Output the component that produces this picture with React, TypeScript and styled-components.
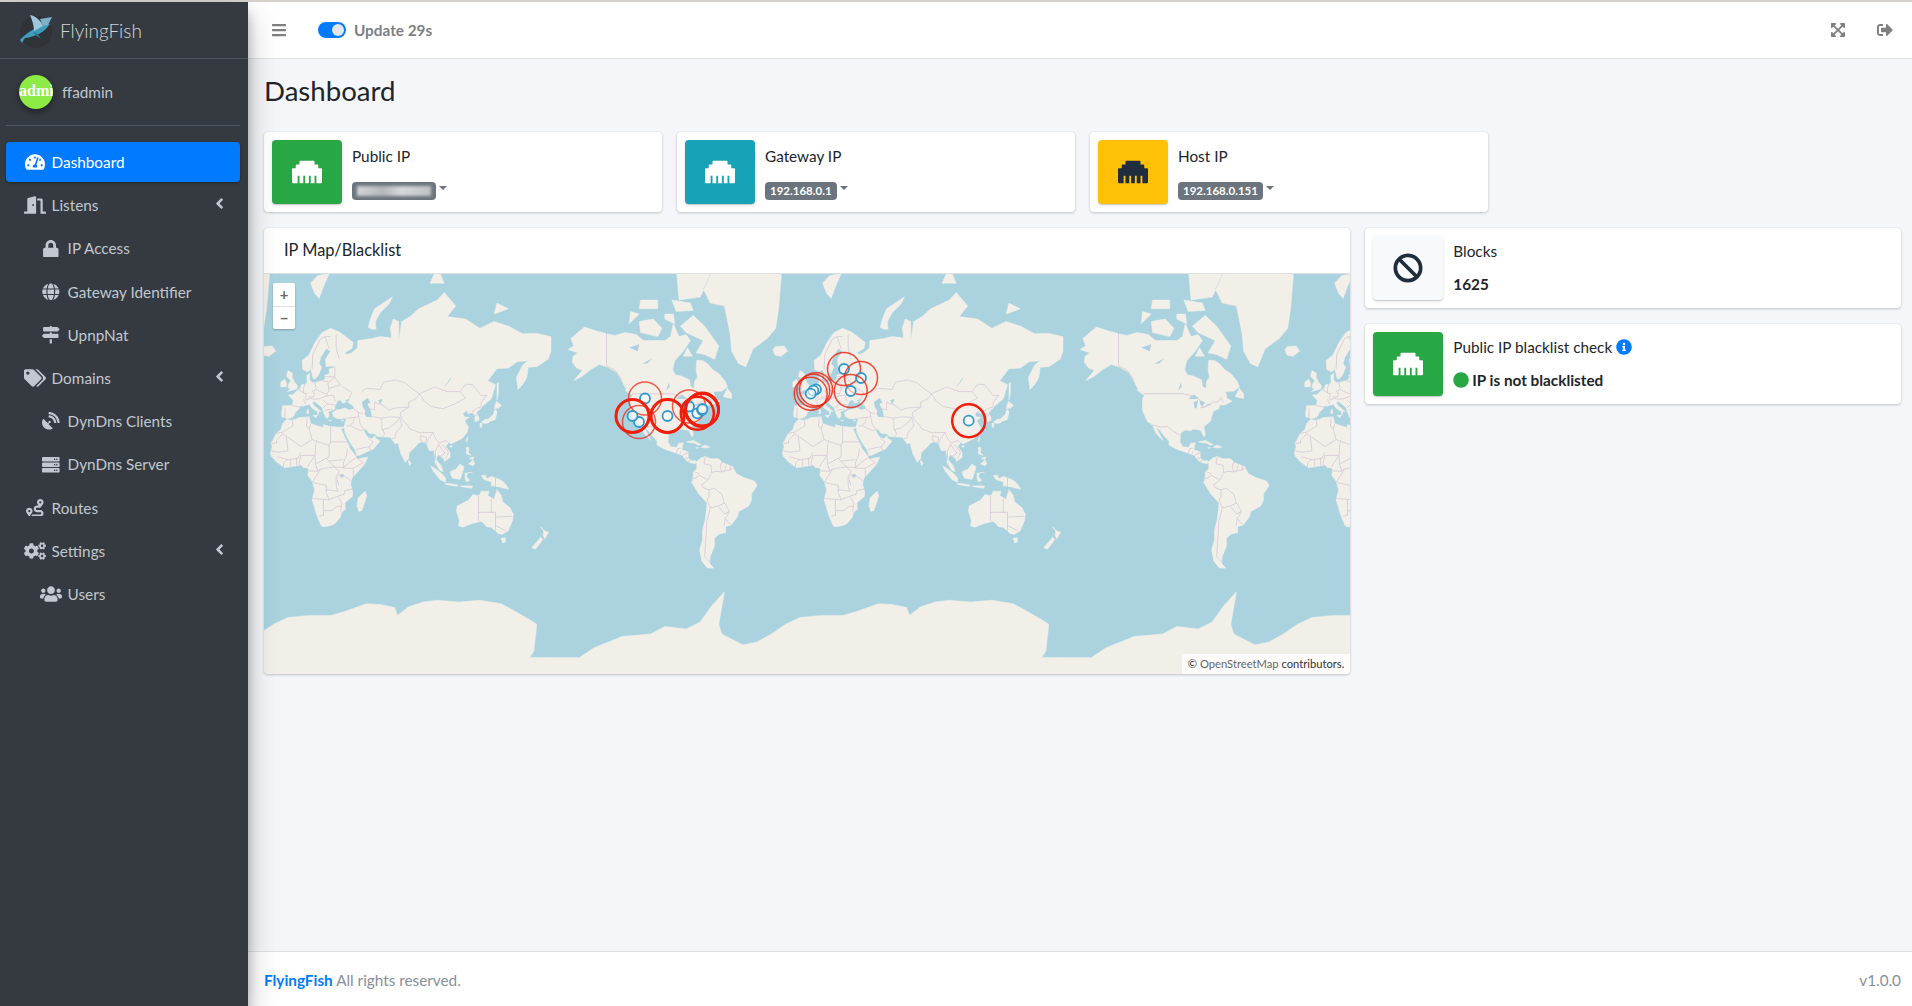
import React from "react";
import styled, { createGlobalStyle } from "styled-components";
import {
  FaAngleLeft,
  FaBan,
  FaBars,
  FaCircle,
  FaCogs,
  FaDoorOpen,
  FaEthernet,
  FaExpandArrowsAlt,
  FaGlobe,
  FaInfoCircle,
  FaLock,
  FaMapSigns,
  FaRoute,
  FaSatelliteDish,
  FaServer,
  FaSignOutAlt,
  FaTachometerAlt,
  FaTags,
  FaUsers,
} from "react-icons/fa";

type Pt = [number, number];

const LAND: Pt[][] = [
  // north america
  [[-168,65.5],[-164,66.5],[-166,68.5],[-156.5,71.3],[-148,70.4],[-141,69.7],[-135,69.3],[-128,70],[-120,69.5],[-115,68],[-108,68],[-100,68],[-96,69],[-94,72],[-90,69],[-85,69.5],[-82,68],[-87,65],[-93,62],[-94.5,59],[-92.5,57],[-88,56.5],[-82.5,55],[-82,52.5],[-79.5,51.3],[-79,54.5],[-77,56],[-78,59],[-77.5,62.3],[-73,62],[-70,61],[-66,58.8],[-62,57.5],[-57.5,54.5],[-56,52],[-60,50.2],[-66,50],[-65,48.5],[-65,47],[-61,45.5],[-66,43.7],[-70,43.5],[-70.5,41.6],[-74,40.5],[-75.5,37.5],[-76,35],[-81,31.5],[-80,27],[-80.5,25.2],[-82,27],[-83,29.2],[-85,29.7],[-89,30],[-90,29.1],[-94,29.5],[-97.3,27.5],[-97.7,22],[-95.5,18.7],[-91.5,18.5],[-90.4,21],[-87,21.4],[-88,17],[-83.5,15.3],[-83.5,11],[-81,9],[-79.5,9.5],[-77.5,8.7],[-78,7.5],[-80,7.3],[-83,8.3],[-85.5,10],[-87.5,13],[-92,14.5],[-96,15.8],[-101,17.5],[-105.5,20],[-105.5,22.5],[-109,26],[-112.5,30],[-114.7,31.5],[-112,27],[-109.7,23],[-112,25],[-115,28],[-117,32.5],[-120.5,34.5],[-122.5,37.8],[-124.2,41],[-124,46.5],[-122.7,48.5],[-127,50.8],[-130,54.5],[-134,58],[-140,59.8],[-146,60.8],[-152,59],[-158,56.5],[-164,54.7],[-158,58.7],[-162,59.5],[-165,61.5],[-164.5,63.5],[-161,64.5]],
  // arctic canada
  [[-80,73.7],[-72,71.5],[-62,66.5],[-65,62.5],[-72,64],[-78,64.5],[-73,68],[-85,70],[-89,71.5]],
  [[-117,70],[-105,69],[-102,71],[-108,73],[-118,72.5]],
  [[-125,72],[-118,74],[-124,74.5]],
  [[-90,76.5],[-75,77],[-62,82],[-75,83],[-92,81]],
  [[-92,74.5],[-80,74.7],[-82,76],[-95,76.5]],
  [[-118,75],[-105,75],[-105,76.5],[-117,76.5]],
  [[-100,73],[-93,72],[-94,74],[-100,74]],
  [[-87,63.5],[-80.5,63.5],[-84,66]],
  [[-59,47.7],[-53,46.7],[-53,49],[-56,51.5]],
  [[-128,50.7],[-123.5,48.4],[-125,50]],
  [[-85,22],[-80,23],[-74.2,20.2],[-77.5,19.9],[-78,21]],
  [[-74.4,18.5],[-72,20],[-68.4,18.7],[-71,18]],
  [[-78.3,18.2],[-76.3,18.2],[-77,17.8]],
  // greenland, iceland
  [[-73,78.2],[-68,80.2],[-60,82],[-40,83.5],[-25,83],[-18,80],[-20,75],[-22,71],[-28,68.5],[-38,65.7],[-43,60],[-48,61],[-53,65],[-54,69.5],[-58,75.5],[-68,76]],
  [[-24,65.5],[-22,66.4],[-16,66.5],[-13.6,65],[-18.5,63.4],[-22.5,63.9]],
  // south america
  [[-77.5,8.7],[-75,11],[-71.5,12.3],[-68,10.7],[-62,10.7],[-60,8.3],[-52,5],[-50,0.5],[-44,-2.7],[-37,-5],[-35,-8],[-39,-14],[-39,-18],[-41,-22],[-48,-25.5],[-48.7,-28.5],[-53.5,-34],[-57,-34.5],[-57,-38],[-62,-39],[-65,-41],[-65,-45],[-68,-50],[-68.5,-53],[-65.5,-55],[-70,-55],[-74,-52],[-75.5,-47],[-73.5,-42],[-73.5,-37],[-71.5,-30],[-70.3,-20],[-76,-14],[-81,-6],[-80,-2.5],[-80,1],[-77.5,4]],
  // eurasia
  [[-9,37],[-9.5,38.7],[-8.8,43.2],[-2,43.4],[-1.2,46],[-4.7,48.4],[-1.5,48.7],[1.5,50.5],[3.5,51.4],[4.7,53],[8.5,53.6],[8.3,56.8],[10.5,57.6],[10.2,55],[12,54],[14,54],[18.5,54.7],[21,55.2],[21,57],[24,57.3],[24,59.3],[28,59.7],[30,60],[25,60.2],[22,60],[21.3,62.5],[25,65],[22,65.8],[18,63],[17,61],[18.8,59.8],[16.5,57],[14.3,55.5],[12.8,55.5],[11.2,59],[8.5,58.2],[5.5,59],[5,62],[10,64],[14,67.5],[19,70],[25,71],[31,70.2],[41,67.5],[40,65.8],[34.8,64.5],[37,64],[40,64.6],[44,66],[44,68],[54,68.5],[60,69],[68,68.7],[67,71],[69,73],[73,72.5],[73,68],[75,72.5],[81,73.5],[87,75],[100,76.5],[105,77.7],[113,75.5],[107,73.5],[120,73],[130,71],[140,72.5],[150,71.5],[160,69.7],[170,69.8],[180,69],[180,65],[178,62.5],[170,60],[164,59.8],[163,56],[160,53],[156.7,51],[155.7,56],[160,60.5],[163.5,62],[156,61.7],[150,59.5],[142,59.3],[135.5,54.7],[141,53],[138,46.7],[132,43],[129.5,41],[127.5,39.7],[129.4,37],[129.2,35.2],[126.4,34.5],[126.6,37.5],[125,39.6],[121.5,39],[121,40.8],[118,39],[119,37.3],[122.5,37],[119.3,35],[122,31],[121,28],[118,24.5],[113.5,22.3],[110,21],[108,21.5],[106,19],[109,15],[109,11.5],[105,8.7],[105,10],[102.5,12.5],[100.5,13.5],[99.3,10],[103,5.5],[104.2,1.5],[101.5,2.8],[98.5,8],[98.5,12],[97.5,16.5],[94.5,16],[92.5,21],[89,22],[87,21.3],[82.5,16.7],[80.2,15],[80,11],[77.6,8],[74.5,14],[73,19.5],[72.7,21],[70,21],[69,22.5],[67,25],[62,25.2],[57.5,25.6],[56.5,27],[52,27.5],[50,30],[48,30],[50,26.5],[51.5,25],[54,24],[56.3,26],[56.5,24.5],[59.8,22.5],[55.5,17.5],[52,16],[45,12.8],[43.3,12.8],[42.5,16.5],[39,21],[35,28],[34.9,29.5],[34.3,31.3],[35,33],[36,36.7],[32,36],[29,36.5],[27,37.5],[26.3,39.5],[29,41],[31.5,41.2],[35,42],[38,41],[41.5,41.5],[41,43],[37,45],[39,47],[35,46],[36,45],[33.5,44.5],[32.5,46],[30.5,46],[28,43],[28,41.5],[26,40.8],[23.5,40.3],[24,38],[23,36.5],[21.5,37],[19.5,41],[19,42.3],[14,45.3],[12.3,45],[13,43.5],[16,41.8],[18.4,40],[16.8,40.4],[16,38],[15.7,40],[12,42],[10,44],[6,43],[3.3,43],[3,41.7],[0,39.5],[-0.5,38],[-2,36.8],[-5.5,36],[-7,37]],
  // africa
  [[-6,35.8],[-2,35.2],[3,36.8],[10,37.3],[11,33.5],[15,32.3],[20,31],[20,32.8],[25,31.6],[32,31.2],[34.3,31.3],[32.6,29.8],[33.5,28],[35.5,24],[37.2,21],[38.5,18],[43,12],[44,10.5],[51.2,11.8],[49,7],[44,1.5],[40,-3],[39,-7],[40.5,-12],[40.5,-15.5],[35,-20],[35.5,-24],[32.8,-26],[32,-29],[28,-33],[25.5,-34],[20,-34.8],[18.3,-34],[15,-27],[12,-18],[13.8,-11],[12,-5],[9,-1],[9.5,4],[6,4.5],[4,6.3],[-3,5],[-7.5,4.5],[-13,8.5],[-16.7,12.5],[-17.3,14.7],[-16,19],[-17,21],[-13,27.5],[-9.8,30],[-9,33]],
  [[49.3,-12],[50.5,-15.5],[47,-25],[45,-25.5],[43.5,-22],[44.5,-16.5]],
  // british isles, mediterranean islands, arctic islands
  [[-5.5,50],[1.3,51.2],[1.7,52.7],[-0.2,54],[-2,56],[-2,57.7],[-5,58.6],[-6,56.5],[-3,54.8],[-4.5,53.3],[-5,51.7],[-3,51.3]],
  [[-10,52],[-6,52.2],[-6,54],[-7.3,55.3],[-10,54.2]],
  [[12.5,38],[15.5,38.2],[15,36.7]],
  [[8.3,39],[9.6,39.2],[9.5,41.2],[8.6,41]],
  [[23.5,35.5],[26,35.2],[24.5,34.9]],
  [[32.5,35],[34.5,35.5],[33.5,34.7]],
  [[11,79],[16,80],[24,80.2],[20,78.5],[17,76.8],[14,77.5]],
  [[51.5,71.2],[53,73],[56,75],[62,76],[68.5,77],[66,75.8],[60,74.3],[56.5,72.5],[57,70.8],[54,70.8]],
  [[95,79],[105,79],[100,81]],
  [[140,74],[150,75],[142,76]],
  // east asia islands
  [[130.9,34],[133,35.5],[136,36],[137.5,37.3],[139.5,38.5],[140,40.5],[141.3,41.3],[142,39.5],[140.8,35.7],[137,34.6],[135.5,33.6],[132.5,34]],
  [[130,33.5],[131.7,33.5],[131,31],[130.2,31.3]],
  [[132.5,33.7],[134.5,34.2],[134,33.3]],
  [[140,41.6],[141.5,45.4],[145.3,43.5],[143,42]],
  [[142,46],[143,49],[143,54],[142,53.5],[142,48]],
  [[120.2,23],[121.5,25.2],[121,22]],
  [[108.7,19.2],[110.5,20],[110,18.3]],
  [[80,9.7],[81.8,7.5],[80.5,6],[79.8,8]],
  [[120.5,18.5],[122.2,18.4],[122,15],[124,13],[120.5,14]],
  [[122,7],[125.5,9.8],[126.4,7],[125,5.8]],
  [[122.5,11],[125.5,12],[125,10]],
  // indonesia, oceania
  [[95.3,5.6],[98,4.2],[103.5,0],[106,-3],[105.8,-5.8],[102,-4],[98,1]],
  [[105.3,-6.7],[108.5,-6.6],[114.5,-7.7],[114.3,-8.7],[106.5,-7.5]],
  [[109,1.5],[111.5,2.8],[113,3.2],[116,7],[119,5],[118,2],[117.5,0],[116,-3.8],[111,-3],[109.5,-0.5]],
  [[119.5,0.5],[124.8,1.3],[121,0.5],[120.5,-2],[123,-4.5],[120.5,-5.5],[119.5,-3]],
  [[131,-1],[134,-0.8],[135,-3.3],[138,-1.7],[144,-3.8],[147,-6],[150.5,-10.5],[147,-10],[143.5,-9],[138,-8.3],[138,-5.5],[133,-4]],
  [[116,-8.5],[122,-8.3],[125,-8.5],[124,-10],[118,-9]],
  [[114,-22],[122,-18],[125,-14.5],[129.5,-15],[131,-12],[136.5,-12],[135.5,-15],[140,-17.5],[142,-11],[145,-15],[146,-19],[151,-23],[153.5,-27],[153,-31],[150,-37],[146,-39],[143,-38.7],[138,-35],[135,-34.8],[131,-31.5],[124,-33],[118,-35],[115,-34.3],[115.5,-31],[113.5,-25]],
  [[145,-41],[148,-41],[148,-43],[146,-43.5]],
  [[173,-35],[175.5,-37],[178.3,-38],[175.5,-41.5],[174.5,-39.5],[174.8,-37]],
  [[172.7,-40.6],[174.2,-41.7],[171,-45],[169,-46.6],[166.5,-46],[170,-43]],
  // antarctica
  [[-180,-78],[-160,-78],[-150,-76.5],[-130,-74.5],[-110,-74],[-100,-72.5],[-85,-73],[-75,-71.5],[-68,-68],[-58,-63.5],[-60,-68],[-62,-72],[-60,-74],[-45,-76],[-35,-75.5],[-25,-74],[-15,-72],[-5,-70.5],[10,-70],[25,-70],[35,-69],[50,-67],[60,-67.2],[70,-68],[72,-70],[80,-67.8],[90,-66.5],[100,-66],[115,-66.5],[130,-66],[145,-67],[155,-69],[165,-71],[170,-72],[168,-77],[165,-78],[180,-78],[180,-85],[-180,-85]],
];

const WATER: Pt[][] = [
  [[47,45],[51,47],[53,45],[51,44],[53.5,40],[54,37],[50,37.3],[49,39],[49.5,40.5],[47.5,43]],
  [[58.5,46],[61.5,46.5],[60,44]],
  [[104,51.7],[106,52.7],[110,55.7],[109,55.5],[105.5,52.6]],
  [[-92,46.7],[-88,48.7],[-84.7,47],[-87,46.5]],
  [[-87.5,41.7],[-88,45],[-85,46],[-86,42]],
  [[-84,46],[-80,45],[-82,43],[-83.5,44]],
  [[-83.4,41.7],[-79,42.8],[-79,43],[-83,42.3]],
  [[-79.7,43.3],[-76.3,43.5],[-76.3,44.2],[-79,43.9]],
  [[-125,66],[-118,67],[-119,65]],
  [[-116,61],[-109,62.7],[-112,61.2]],
  [[-99,50.5],[-97,54],[-96.5,52]],
  [[32,0],[34,0],[34,-2.5],[32,-2.5]],
  [[29.5,-4],[30,-4],[31,-8.5],[30.5,-8]],
];

const BORDERS: Pt[][] = [
  [[-123,49],[-95,49],[-89,48],[-84.5,46.5],[-82.5,45],[-82.5,42.5],[-79,43],[-76,44.3],[-74.7,45],[-71,45.2],[-69,47.3],[-67.8,45.7],[-67,44.8]],
  [[-141,69.7],[-141,60.3],[-135,58.8],[-130,55]],
  [[-117,32.5],[-111,31.3],[-106.5,31.7],[-103,29],[-97.2,26]],
  [[-92,14.5],[-91,17.5],[-89,17.8],[-88.3,18]],
  [[-89.2,14],[-88.5,15.8]],
  [[-87.5,13],[-83.2,15]],
  [[-85.7,11],[-83.7,11]],
  [[-83,8.3],[-82.7,9.7]],
  [[-71.5,12],[-72.5,7.3],[-67.5,6],[-67,1.2]],
  [[-60,8.3],[-61,5],[-60,1.5]],
  [[-57,6],[-58,2]],
  [[-54,5.8],[-54,2.3]],
  [[-52,3.7],[-60,1.5],[-64,2],[-67,1.2],[-69.8,-4.3],[-74,-7.5],[-73,-9.5],[-69.5,-11],[-65.3,-10],[-60,-14],[-58,-20],[-54.5,-25.5],[-57.5,-30],[-53.5,-33.8]],
  [[-80,-3.5],[-75.5,-1],[-70,-4]],
  [[-78.8,1.4],[-75.5,0]],
  [[-70.3,-18.3],[-69,-16],[-69,-11]],
  [[-68,-23],[-70.5,-32],[-71,-40],[-72,-50],[-68.5,-52.3]],
  [[-68,-23],[-62.5,-22],[-58,-20]],
  [[-62.5,-22],[-58,-27],[-54.5,-25.5]],
  [[-58.3,-34],[-57.5,-30]],
  [[-70.3,-18.3],[-68,-23]],
  [[-1.8,43.3],[3,42.5]],
  [[-7,42],[-7,37.2]],
  [[2.5,51],[6,49.5],[8,49],[7.5,47.5],[6,46.3],[7.5,43.8]],
  [[14,54],[15,51],[12.2,50.3],[13.7,48.7],[13,47.5],[9.6,47.5]],
  [[6,49.5],[6,51.5],[7,53.3]],
  [[18.5,54.7],[23,54.3],[24,50.5],[22.5,49],[19,49.5],[15,51]],
  [[7,46],[10.5,46.8],[13.7,46.5]],
  [[13.7,46.5],[16.5,46.5],[22,48],[22.5,49]],
  [[22,48],[27,48.3],[28.2,45.5]],
  [[22.7,44],[28.5,43.7]],
  [[21,40.8],[26,41.5]],
  [[19.5,42],[22.7,44],[20,46]],
  [[33,52.3],[40,49.6],[38.2,47.1]],
  [[23.5,53.9],[28,56],[32,53],[24,51.5]],
  [[28,56],[28,59.5]],
  [[21,56.3],[28,56.2]],
  [[31,62.5],[29,66],[29,69.5]],
  [[25,69],[21,69],[24,65.8]],
  [[12,59],[12.5,64],[18,68.5],[21,69]],
  [[44.5,39.7],[44.8,37.2],[36.5,36.5]],
  [[42,37],[41,34.5],[39,32.2],[46.5,29],[48,30]],
  [[44.8,37.2],[46,33],[48,30]],
  [[41.5,41.5],[44.5,39.7],[48,39]],
  [[61,36.5],[61,31],[63,27],[61.5,25]],
  [[39,32.2],[36,32]],
  [[52,19],[55,22],[52,24],[51.5,25]],
  [[43,17],[52,19],[53,16.5]],
  [[47,50],[50,51.5],[60,51],[62,54],[70,55],[77,54],[83,51],[87.5,49]],
  [[51,42],[56,41],[56,45],[62,43.5],[66,41],[70,42],[80,42.5]],
  [[54,37.5],[61,36.5]],
  [[80,42.5],[80,45],[85.5,47],[87.5,49]],
  [[87.5,49],[98,52],[107,50],[116,50],[120,47],[112,44],[104,41.7],[96,42.7],[91,45.5],[87.5,49]],
  [[116,50],[120,53.3],[125,53],[131,48],[135,48.4],[131,45],[130.7,42.5]],
  [[124.5,40],[128,42],[130.7,42.5]],
  [[126,38],[128.5,38.5]],
  [[80,42.5],[74,39.5],[75,36],[79,32.5],[81,30],[88,27.8],[92,28],[97,28],[98.5,24.5],[101.5,21.3],[106,23],[108,21.5]],
  [[74,36],[75,32],[71,28],[70,24.5],[68,23.7]],
  [[61,29.5],[66.5,31],[71,34],[74,37]],
  [[61,36.5],[66,37.3],[74,37]],
  [[88,26],[89,22],[92,21],[92.5,25],[88,26]],
  [[92.5,21],[94.5,25],[97,28]],
  [[98.5,16],[99,10]],
  [[98.5,16],[101,20],[101.5,21.3]],
  [[101,20],[105.5,14.5],[102.5,12.5]],
  [[104,20],[108,15],[106,11]],
  [[-2,35],[-1.5,32],[-9,28],[-13,27.5]],
  [[-17,21],[-13,21.3],[-13,23],[-8.7,27.3]],
  [[-6,25],[-5,16],[-12,15],[-16.5,16]],
  [[-8.7,27.3],[1,21],[4,19],[12,23.5],[10,30],[8,32],[8.5,36.8]],
  [[11,33],[10,30]],
  [[12,23.5],[24,19.5],[25,22],[25,31.6]],
  [[25,22],[37,22]],
  [[15,23],[14,13],[14.5,7],[22,11],[24,12],[24,19.5]],
  [[22,11],[27.5,5],[34,4.5],[38,8],[43,11.5]],
  [[37,17.5],[36,12.5],[34,8],[34,4.5]],
  [[24,9],[34,10]],
  [[4,13],[14,13]],
  [[2.7,6.3],[4,13]],
  [[8.5,4.7],[14,13]],
  [[-12,12],[-5,10],[2,11],[4,15]],
  [[-8,4.5],[-8,8],[-5,10]],
  [[-3,5],[-3,11]],
  [[1,6],[1,11]],
  [[12,-6],[13,-4.5],[18,3.5],[27.5,5],[31,2],[29,-2],[29,-8],[30,-12],[22,-11],[22,-8],[12.5,-6]],
  [[9.5,2.2],[16,2],[18,3.5]],
  [[14.5,7],[16,2]],
  [[34,4],[41,4],[41,-2]],
  [[34,-1],[39,-4.7]],
  [[30,-1],[34,-1]],
  [[40.5,-10.5],[35,-11.5],[34.5,-14],[30,-15.5],[33,-20],[32,-26]],
  [[12,-17],[23,-17.8]],
  [[22,-11],[22,-13],[24,-18]],
  [[20,-18],[20,-28],[17,-28.5]],
  [[20,-25],[26,-25],[29,-22.3],[33,-22]],
  [[23,-18],[30,-15.5]],
  [[41,4],[48,8],[43,11.5]],
  [[129,-15],[129,-31.5]],
  [[129,-26],[141,-26]],
  [[138,-17],[138,-26]],
  [[141,-26],[141,-38]],
  [[141,-29],[153,-28.5]],
  [[141,-34],[148,-37]],
  [[141,-2.6],[141,-9]],
];

const MAP_W = 1086;
const MAP_H = 400;
const WORLD = 512;

const px = ([lon, lat]: Pt, shift: number): string => {
  const x = MAP_W / 2 + (lon * WORLD) / 360 + shift;
  const y =
    MAP_H / 2 -
    (WORLD / (2 * Math.PI)) *
      Math.log(Math.tan(Math.PI / 4 + (lat * Math.PI) / 360));
  return `${x.toFixed(1)} ${y.toFixed(1)}`;
};

function toPath(lines: Pt[][], closed: boolean) {
  return [-WORLD, 0, WORLD]
    .map((shift) =>
      lines
        .map(
          (line) =>
            "M" + line.map((p) => px(p, shift)).join("L") + (closed ? "Z" : ""),
        )
        .join(""),
    )
    .join("");
}

// pane coordinates of the markers; heavy rings are several stacked features
const MARKERS = [
  { x: 381, y: 124.5, opacity: 0.7, width: 1.5 },
  { x: 375, y: 148, opacity: 0.7, width: 1.5 },
  { x: 368.5, y: 142, opacity: 1, width: 3 },
  { x: 403.5, y: 142, opacity: 1, width: 3 },
  { x: 425, y: 132.5, opacity: 0.7, width: 1.5 },
  { x: 433.3, y: 139.3, opacity: 1, width: 2.5 },
  { x: 438, y: 136, opacity: 1, width: 3 },
  { x: 438.5, y: 135, opacity: 1, width: 2 },
  { x: 580, y: 95, opacity: 0.8, width: 1.5 },
  { x: 597, y: 104, opacity: 0.8, width: 1.5 },
  { x: 586.7, y: 117, opacity: 0.8, width: 1.5 },
  { x: 552, y: 115.3, opacity: 0.8, width: 1.5 },
  { x: 549.3, y: 116.7, opacity: 0.8, width: 1.5 },
  { x: 546.7, y: 119.7, opacity: 0.8, width: 1.5 },
  { x: 704.7, y: 146.7, opacity: 1, width: 2.5 },
];

const GlobalStyle = createGlobalStyle`
  html, body { margin: 0; height: 100%; }
  body {
    font-family: "Lato", "Liberation Sans", sans-serif;
    font-size: 15.3px;
    color: #212529;
    background: #f4f6f9;
  }
`;

const Page = styled.div`
  height: 100vh;
  display: grid;
  grid-template-columns: 248px 1fr;
  grid-template-rows: 2px 1fr;
  overflow: hidden;
`;

const TopLine = styled.div`
  grid-column: 1 / 3;
  background: #d6d1cc;
`;

const Sidebar = styled.aside`
  background: #343a40;
  color: #c2c7d0;
  box-shadow: 0 14px 28px rgba(0, 0, 0, 0.25), 0 10px 10px rgba(0, 0, 0, 0.22);
  z-index: 2;
`;

const Brand = styled.div`
  height: 56px;
  border-bottom: 1px solid #4b545c;
  display: flex;
  align-items: center;
  gap: 7px;
  padding-left: 19px;
  font-size: 19px;
  font-weight: 300;
  color: rgba(255, 255, 255, 0.8);
`;

const UserPanel = styled.div`
  margin: 16px 8px 16px 6px;
  padding: 0 0 16px 13px;
  height: 34px;
  border-bottom: 1px solid #4f5962;
  display: flex;
  align-items: flex-start;
  gap: 9px;
  width: 221px;
`;

const Avatar = styled.div`
  width: 34px;
  height: 34px;
  flex: none;
  border-radius: 50%;
  background: #8cec45;
  color: #fff;
  font-family: "Liberation Serif", serif;
  font-weight: 700;
  font-size: 16px;
  line-height: 31px;
  overflow: hidden;
  white-space: nowrap;
  box-shadow: 0 3px 6px rgba(0, 0, 0, 0.16), 0 3px 6px rgba(0, 0, 0, 0.23);
`;

const UserName = styled.span`
  line-height: 34px;
`;

const Nav = styled.nav`
  padding: 0 8px 0 6px;
  display: flex;
  flex-direction: column;
  gap: 3.2px;
`;

const NavLink = styled.a<{ $active?: boolean; $sub?: boolean }>`
  height: 40px;
  display: flex;
  align-items: center;
  padding: 0 16px 0 ${({ $sub }) => ($sub ? "32px" : "16px")};
  border-radius: 4px;
  color: ${({ $active }) => ($active ? "#fff" : "#c2c7d0")};
  background: ${({ $active }) => ($active ? "#007bff" : "transparent")};
  box-shadow: ${({ $active }) =>
    $active ? "0 1px 3px rgba(0,0,0,.12), 0 1px 2px rgba(0,0,0,.24)" : "none"};
`;

const NavIcon = styled.span`
  width: 25.6px;
  margin-right: 4px;
  display: flex;
  justify-content: center;
  flex: none;
`;

const NavArrow = styled.span`
  margin-left: auto;
  margin-right: -4px;
  margin-top: -3px;
  display: flex;
  font-size: 17px;
`;

const Main = styled.div`
  display: flex;
  flex-direction: column;
  min-width: 0;
`;

const Navbar = styled.header`
  height: 56px;
  background: #fff;
  border-bottom: 1px solid #dee2e6;
  display: flex;
  align-items: center;
  padding: 0 19px 0 23px;
  color: rgba(0, 0, 0, 0.5);
`;

const BarsIcon = styled(FaBars)`
  font-size: 16px;
  margin-right: 31px;
`;

const Switch = styled.span`
  width: 28px;
  height: 16px;
  border-radius: 8px;
  background: #007bff;
  display: flex;
  align-items: center;
  justify-content: flex-end;
  padding-right: 2px;
  box-sizing: border-box;
  margin-right: 8px;

  &::after {
    content: "";
    width: 12px;
    height: 12px;
    border-radius: 50%;
    background: #e3e5e8;
  }
`;

const UpdateLabel = styled.span`
  font-weight: 700;
  color: #7b7f84;
`;

const NavbarRight = styled.div`
  margin-left: auto;
  display: flex;
  align-items: center;
  gap: 31px;
  font-size: 16px;
`;

const Content = styled.main`
  flex: 1;
  padding: 0 11px 0 16px;
`;

const Title = styled.h1`
  margin: 0;
  padding-top: 15px;
  height: 58px;
  box-sizing: content-box;
  font-size: 27.6px;
  font-weight: 400;
  line-height: 34px;
`;

const InfoRow = styled.div`
  display: grid;
  grid-template-columns: repeat(4, 1fr);
  gap: 15px;
  margin-bottom: 16px;
`;

const InfoBox = styled.div`
  display: flex;
  height: 80px;
  box-sizing: border-box;
  padding: 8px;
  background: #fff;
  border-radius: 4px;
  box-shadow: 0 0 1px rgba(0, 0, 0, 0.125), 0 1px 3px rgba(0, 0, 0, 0.2);
`;

const InfoIcon = styled.span<{ $bg: string; $fg: string }>`
  width: 70px;
  flex: none;
  border-radius: 4px;
  background: ${({ $bg }) => $bg};
  color: ${({ $fg }) => $fg};
  display: flex;
  align-items: center;
  justify-content: center;
  font-size: 30px;
  box-shadow: 0 2px 4px rgba(0, 0, 0, 0.08), 0 1px 1px rgba(0, 0, 0, 0.16);
`;

const InfoText = styled.div`
  padding: 0 10px 2px;
  display: flex;
  flex-direction: column;
  justify-content: center;
`;

const InfoTitle = styled.div`
  line-height: 26px;
  display: flex;
  align-items: center;
  gap: 4px;
`;

const InfoValue = styled.div<{ $gap: number }>`
  margin-top: ${({ $gap }) => $gap}px;
  font-weight: 700;
  line-height: 26px;
  display: flex;
  align-items: center;
  gap: 3px;
`;

const Badge = styled.span`
  background: #6c757d;
  color: #fff;
  border-radius: 4px;
  font-size: 11.5px;
  font-weight: 700;
  height: 18px;
  line-height: 18px;
  padding: 0 5px;
  display: inline-block;
`;

const HiddenIp = styled.span`
  display: block;
  width: 74px;
  height: 10px;
  margin-top: 4px;
  background: linear-gradient(90deg, #d2d4d6, #b5b8bb 35%, #d6d8da 60%, #bfc2c4);
  filter: blur(1.5px);
`;

const Caret = styled.span`
  width: 0;
  height: 0;
  margin-top: -6px;
  border-top: 4.5px solid #6c757d;
  border-left: 4.5px solid transparent;
  border-right: 4.5px solid transparent;
`;

const Columns = styled.div`
  display: grid;
  grid-template-columns: calc((100% + 15px) * 2 / 3 - 15px) 1fr;
  gap: 15px;
  align-items: start;
`;

const Card = styled.section`
  background: #fff;
  border-radius: 4px;
  overflow: hidden;
  box-shadow: 0 0 1px rgba(0, 0, 0, 0.125), 0 1px 3px rgba(0, 0, 0, 0.2);
`;

const CardHeader = styled.div`
  height: 45px;
  line-height: 44px;
  padding-left: 20px;
  font-size: 16.4px;
  border-bottom: 1px solid rgba(0, 0, 0, 0.125);
`;

const MapPane = styled.div`
  position: relative;
  height: 400px;
  background: #aad3df;
`;

const MapSvg = styled.svg`
  display: block;
`;

const ZoomControl = styled.div`
  position: absolute;
  top: 9px;
  left: 9px;
  width: 22px;
  border-radius: 2px;
  background: #fff;
  box-shadow: 0 1px 2px rgba(0, 0, 0, 0.25);
`;

const ZoomButton = styled.div`
  height: 22.5px;
  line-height: 22px;
  text-align: center;
  font-size: 15px;
  font-weight: 700;
  color: #666;

  & + & {
    border-top: 1px solid #ddd;
  }
`;

const Attribution = styled.div`
  position: absolute;
  right: 0;
  bottom: 0;
  height: 20px;
  line-height: 20px;
  padding: 0 6px;
  font-size: 11.2px;
  color: #333;
  background: rgba(255, 255, 255, 0.8);
  border-top-left-radius: 4px;
`;

const OsmLink = styled.span`
  color: #666;
`;

const SideColumn = styled.div`
  display: flex;
  flex-direction: column;
  gap: 16px;
`;

const InfoGlyph = styled(FaInfoCircle)`
  color: #007bff;
  font-size: 16px;
`;

const StatusDot = styled(FaCircle)`
  color: #28a745;
  font-size: 16px;
`;

const Footer = styled.footer`
  height: 55px;
  box-sizing: border-box;
  background: #fff;
  border-top: 1px solid #dee2e6;
  display: flex;
  align-items: center;
  justify-content: space-between;
  padding: 2px 11px 0 16px;
  color: #869099;
`;

const FooterBrand = styled.strong`
  color: #007bff;
`;

function Logo() {
  return (
    <svg width="34" height="36" viewBox="0 0 34 36" aria-hidden="true">
      <circle cx="17" cy="20" r="16" fill="#2f3338" />
      <path d="M1 28 C8 20 18 14 31 12 C26 20 16 25 6 26 L3 31 Z" fill="#3e9dbb" />
      <path d="M11 3 C16 4 22 8 24 14 L15 19 C15 13 13 8 11 3 Z" fill="#9fc6dc" />
      <path d="M21 7 L33 5 L29 13 L24 14 Z" fill="#7fb1cb" />
      <path d="M14 21 L22 27 L17 20 Z" fill="#2f7f9b" />
    </svg>
  );
}

function WorldMap() {
  const land = toPath(LAND, true);
  const water = toPath(WATER, true);
  const borders = toPath(BORDERS, false);
  return (
    <MapSvg width={MAP_W} height={MAP_H} viewBox={`0 0 ${MAP_W} ${MAP_H}`}>
      <path d={land} fill="#f2efe9" stroke="#f2efe9" strokeWidth="0.5" />
      <path d={water} fill="#aad3df" />
      <path d={borders} fill="none" stroke="#d3c3d3" strokeWidth="0.7" />
      {MARKERS.map((m, i) => (
        <g key={i}>
          <circle
            cx={m.x}
            cy={m.y}
            r="16.5"
            fill="none"
            stroke="#f01e0a"
            strokeOpacity={m.opacity}
            strokeWidth={m.width}
          />
          <circle
            cx={m.x}
            cy={m.y}
            r="5"
            fill="rgba(255,255,255,0.6)"
            stroke="#3399cc"
            strokeWidth="1.8"
          />
        </g>
      ))}
    </MapSvg>
  );
}

const MENU = [
  { label: "Dashboard", icon: <FaTachometerAlt size={20} />, active: true },
  { label: "Listens", icon: <FaDoorOpen size={22} />, arrow: true },
  { label: "IP Access", icon: <FaLock size={17.6} />, sub: true },
  { label: "Gateway Identifier", icon: <FaGlobe size={17.6} />, sub: true },
  { label: "UpnpNat", icon: <FaMapSigns size={17.6} />, sub: true },
  { label: "Domains", icon: <FaTags size={22} />, arrow: true },
  { label: "DynDns Clients", icon: <FaSatelliteDish size={17.6} />, sub: true },
  { label: "DynDns Server", icon: <FaServer size={17.6} />, sub: true },
  { label: "Routes", icon: <FaRoute size={17.6} /> },
  { label: "Settings", icon: <FaCogs size={22} />, arrow: true },
  { label: "Users", icon: <FaUsers size={22} />, sub: true },
];

export default function App() {
  return (
    <Page>
      <GlobalStyle />
      <TopLine />
      <Sidebar>
        <Brand>
          <Logo />
          FlyingFish
        </Brand>
        <UserPanel>
          <Avatar>admin</Avatar>
          <UserName>ffadmin</UserName>
        </UserPanel>
        <Nav>
          {MENU.map((item) => (
            <NavLink key={item.label} $active={item.active} $sub={item.sub}>
              <NavIcon>{item.icon}</NavIcon>
              {item.label}
              {item.arrow && (
                <NavArrow>
                  <FaAngleLeft />
                </NavArrow>
              )}
            </NavLink>
          ))}
        </Nav>
      </Sidebar>
      <Main>
        <Navbar>
          <BarsIcon />
          <Switch />
          <UpdateLabel>Update 29s</UpdateLabel>
          <NavbarRight>
            <FaExpandArrowsAlt />
            <FaSignOutAlt />
          </NavbarRight>
        </Navbar>
        <Content>
          <Title>Dashboard</Title>
          <InfoRow>
            <InfoBox>
              <InfoIcon $bg="#28a745" $fg="#fff">
                <FaEthernet />
              </InfoIcon>
              <InfoText>
                <InfoTitle>Public IP</InfoTitle>
                <InfoValue $gap={13}>
                  <Badge>
                    <HiddenIp />
                  </Badge>
                  <Caret />
                </InfoValue>
              </InfoText>
            </InfoBox>
            <InfoBox>
              <InfoIcon $bg="#17a2b8" $fg="#fff">
                <FaEthernet />
              </InfoIcon>
              <InfoText>
                <InfoTitle>Gateway IP</InfoTitle>
                <InfoValue $gap={13}>
                  <Badge>192.168.0.1</Badge>
                  <Caret />
                </InfoValue>
              </InfoText>
            </InfoBox>
            <InfoBox>
              <InfoIcon $bg="#ffc107" $fg="#1f2d3d">
                <FaEthernet />
              </InfoIcon>
              <InfoText>
                <InfoTitle>Host IP</InfoTitle>
                <InfoValue $gap={13}>
                  <Badge>192.168.0.151</Badge>
                  <Caret />
                </InfoValue>
              </InfoText>
            </InfoBox>
          </InfoRow>
          <Columns>
            <Card>
              <CardHeader>IP Map/Blacklist</CardHeader>
              <MapPane>
                <WorldMap />
                <ZoomControl>
                  <ZoomButton>+</ZoomButton>
                  <ZoomButton>−</ZoomButton>
                </ZoomControl>
                <Attribution>
                  © <OsmLink>OpenStreetMap</OsmLink> contributors.
                </Attribution>
              </MapPane>
            </Card>
            <SideColumn>
              <InfoBox>
                <InfoIcon $bg="#f8f9fa" $fg="#1f2d3d">
                  <FaBan />
                </InfoIcon>
                <InfoText>
                  <InfoTitle>Blocks</InfoTitle>
                  <InfoValue $gap={7}>1625</InfoValue>
                </InfoText>
              </InfoBox>
              <InfoBox>
                <InfoIcon $bg="#28a745" $fg="#fff">
                  <FaEthernet />
                </InfoIcon>
                <InfoText>
                  <InfoTitle>
                    Public IP blacklist check <InfoGlyph />
                  </InfoTitle>
                  <InfoValue $gap={7}>
                    <StatusDot />
                    IP is not blacklisted
                  </InfoValue>
                </InfoText>
              </InfoBox>
            </SideColumn>
          </Columns>
        </Content>
        <Footer>
          <span>
            <FooterBrand>FlyingFish</FooterBrand> All rights reserved.
          </span>
          <span>v1.0.0</span>
        </Footer>
      </Main>
    </Page>
  );
}
